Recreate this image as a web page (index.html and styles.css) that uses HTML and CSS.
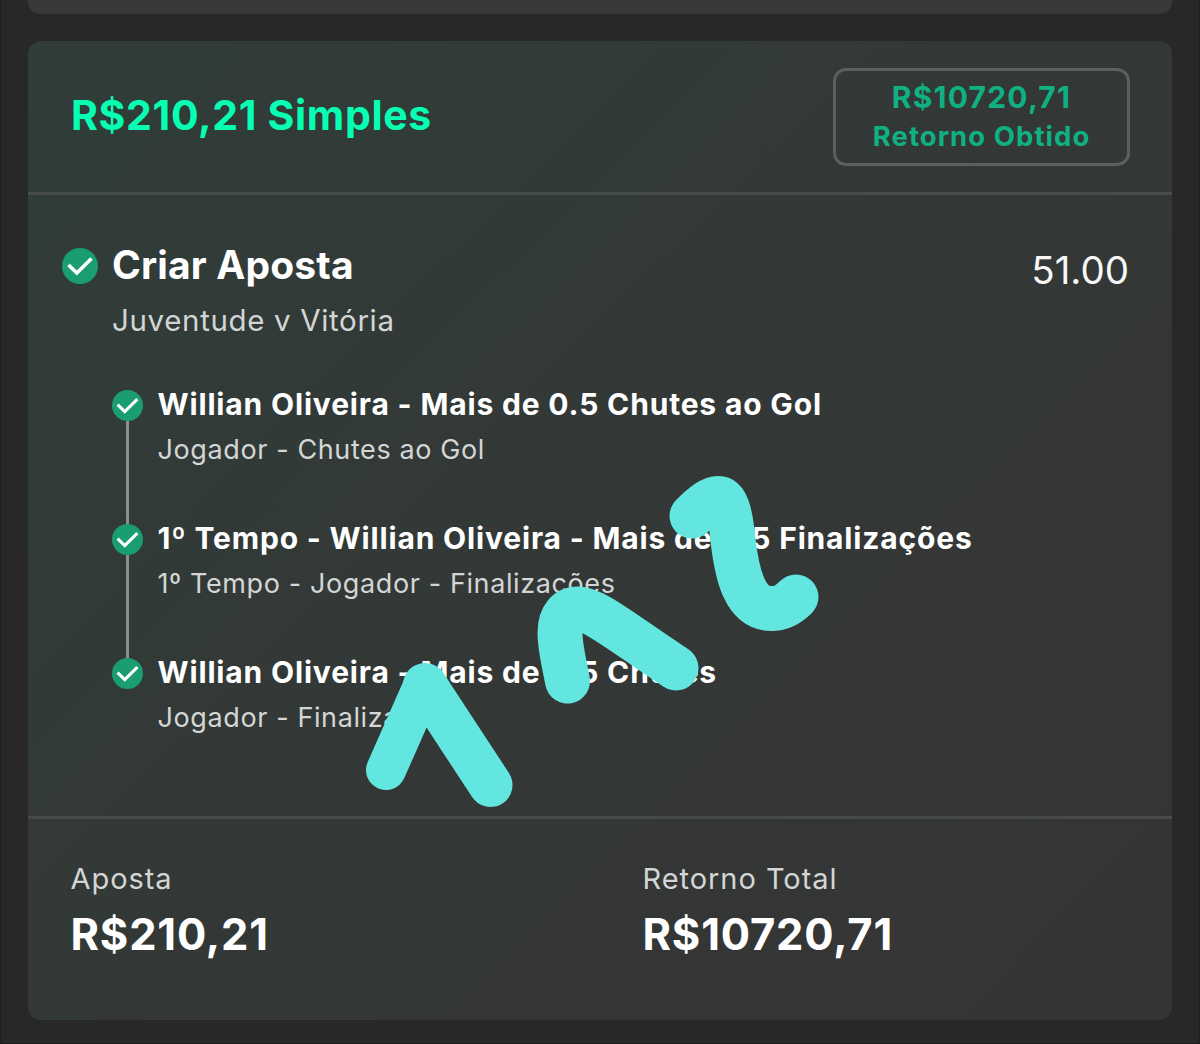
FILE: index.html
```html
<!DOCTYPE html>
<html lang="pt-BR">
<head>
<meta charset="utf-8">
<title>Minhas Apostas</title>
<link rel="stylesheet" href="styles.css">
</head>
<body>
<svg class="defs" width="0" height="0" aria-hidden="true">
  <symbol id="check" viewBox="0 0 36 36">
    <circle cx="18" cy="18" r="18" fill="#1a9d72"/>
    <path d="M6.500 17 L14.800 25 L29.500 10.500" fill="none" stroke="#fff" stroke-width="3.600"/>
  </symbol>
</svg>
<main class="page">
  <div class="previous-card"></div>
  <article class="bet-card">
    <header class="bet-header">
      <h1 class="stake-title">R$210,21 Simples</h1>
      <div class="return-box">
        <span class="return-value">R$10720,71</span>
        <span class="return-label">Retorno Obtido</span>
      </div>
    </header>
    <section class="bet-body">
      <svg class="main-icon"><use href="#check"/></svg>
      <div class="selection">
        <h2 class="selection-title">Criar Aposta</h2>
        <p class="fixture">Juventude v Vitória</p>
        <ul class="legs">
          <li class="leg">
            <div class="rail"><svg class="leg-icon"><use href="#check"/></svg><i class="connector"></i></div>
            <div class="leg-text">
              <h3 class="leg-title">Willian Oliveira - Mais de 0.5 Chutes ao Gol</h3>
              <p class="leg-market">Jogador - Chutes ao Gol</p>
            </div>
          </li>
          <li class="leg">
            <div class="rail"><svg class="leg-icon"><use href="#check"/></svg><i class="connector"></i></div>
            <div class="leg-text">
              <h3 class="leg-title">1º Tempo - Willian Oliveira - Mais de 0.5 Finalizações</h3>
              <p class="leg-market">1º Tempo - Jogador - Finalizações</p>
            </div>
          </li>
          <li class="leg">
            <div class="rail"><svg class="leg-icon"><use href="#check"/></svg></div>
            <div class="leg-text">
              <h3 class="leg-title">Willian Oliveira - Mais de 0.5 Chutes</h3>
              <p class="leg-market">Jogador - Finaliza</p>
            </div>
          </li>
        </ul>
      </div>
      <div class="odds">51.00</div>
    </section>
    <footer class="bet-footer">
      <div class="total">
        <p class="total-label">Aposta</p>
        <p class="total-value">R$210,21</p>
      </div>
      <div class="total">
        <p class="total-label">Retorno Total</p>
        <p class="total-value">R$10720,71</p>
      </div>
    </footer>
  </article>
  <svg class="markup" viewBox="0 0 1200 1044" aria-hidden="true">
    <path d="M386 770 L424 684" stroke-width="40"/>
    <path d="M425 685 L490.500 785" stroke-width="44"/>
    <path d="M567.500 681 C564 662 560 648 560 633 C560 616 568 609 578 609 C594 609 620 631 676 668" stroke-width="45"/>
    <path d="M692 516 C704 504 712 498.500 718 498.500 C728 498.500 731 520 733 540 C737 575 745 608.500 771 608.500 C783 608.500 790 603 796 597" stroke-width="45"/>
  </svg>
</main>
</body>
</html>
```
FILE: styles.css
```css
* { box-sizing: border-box; margin: 0; padding: 0; }

body {
  background: #282828;
  color: #fff;
  font-family: Inter, "Liberation Sans", sans-serif;
}

.defs { position: absolute; }

.page {
  position: relative;
  width: 1200px;
  height: 1044px;
  padding: 0 27px;
  border: solid #1d1d1d;
  border-width: 0 1px 1px;
  overflow: hidden;
}

.previous-card {
  height: 13.5px;
  border-radius: 0 0 13px 13px;
  background: #393939;
}

.bet-card {
  display: flex;
  flex-direction: column;
  height: 979px;
  margin-top: 27.5px;
  border-radius: 13px;
  background: linear-gradient(135deg, #303d39 0%, #333836 50%, #353535 90%);
}

.bet-header {
  display: flex;
  justify-content: space-between;
  align-items: center;
  height: 154px;
  padding: 0 42px 0 43px;
  border-bottom: 3px solid #464c4a;
}

.stake-title {
  margin-bottom: 4px;
  color: #06ffb3;
  font-size: 41px;
  font-weight: 700;
  letter-spacing: 0.66px;
}

.return-box {
  display: flex;
  flex-direction: column;
  align-items: center;
  justify-content: center;
  width: 297px;
  height: 98px;
  border: 3px solid #59605e;
  border-radius: 13px;
  color: #0fb182;
  font-weight: 700;
  line-height: 39px;
}

.return-value { font-size: 30px; letter-spacing: 1.2px; }
.return-label { font-size: 27.5px; letter-spacing: 1.05px; }

.bet-body {
  display: flex;
  height: 624px;
  padding: 46px 43px 0 34px;
  border-bottom: 3px solid #464a49;
}

.main-icon { flex: none; width: 36px; height: 36px; margin: 7px 14px 0 0; }
.selection { flex: 1; }

.selection-title {
  font-size: 39px;
  font-weight: 700;
  letter-spacing: 0.15px;
  line-height: 47px;
}

.fixture {
  color: #d3d6d5;
  font-size: 29.5px;
  letter-spacing: 0.65px;
  line-height: 65px;
}

.legs { margin-top: 36.5px; list-style: none; }

.leg { display: flex; gap: 14.5px; height: 134px; }

.rail {
  display: flex;
  flex-direction: column;
  align-items: center;
  width: 31px;
}

.leg-icon { flex: none; width: 31px; height: 31px; }
.connector { flex: 1; width: 3px; background: #8b8f8d; }

.leg-text { margin-top: -9px; white-space: nowrap; }

.leg-title {
  font-size: 30px;
  font-weight: 700;
  letter-spacing: 0.83px;
  line-height: 46px;
}

.leg-market {
  color: #d3d6d5;
  font-size: 27px;
  letter-spacing: 0.61px;
  line-height: 45px;
}

.odds {
  color: #f6f7f7;
  font-size: 38.5px;
  line-height: 58px;
}

.bet-footer {
  display: grid;
  grid-template-columns: 1fr 1fr;
  padding-top: 40px;
}

.total { padding-left: 42.5px; }

.total-label {
  color: #d3d6d5;
  font-size: 29px;
  letter-spacing: 0.95px;
  line-height: 39px;
}

.total-value {
  font-size: 43.5px;
  font-weight: 700;
  letter-spacing: 0.8px;
  line-height: 72px;
}

/* hand-drawn marks over the slip */
.markup {
  position: absolute;
  top: 0;
  left: -1px;
  width: 1200px;
  height: 1044px;
  fill: none;
  stroke: #63e6e0;
  stroke-linecap: round;
  stroke-linejoin: round;
}
```
